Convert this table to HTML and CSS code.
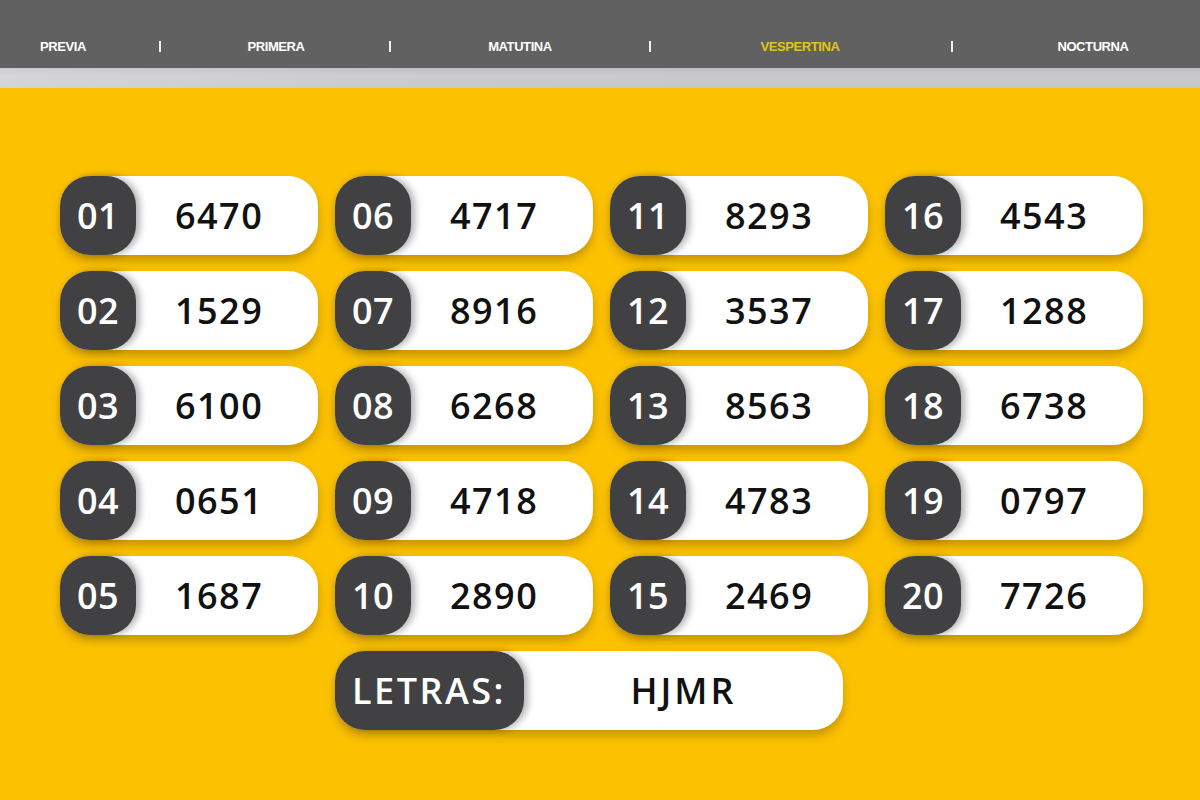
FILE: index.html
```html
<!DOCTYPE html>
<html lang="es">
<head>
<meta charset="utf-8">
<title>Resultados Vespertina</title>
<link rel="stylesheet" href="styles.css">
</head>
<body>
<header class="topbar">
  <nav class="nav">
    <span class="nav-item">PREVIA</span>
    <span class="sep"></span>
    <span class="nav-item">PRIMERA</span>
    <span class="sep"></span>
    <span class="nav-item">MATUTINA</span>
    <span class="sep"></span>
    <span class="nav-item active">VESPERTINA</span>
    <span class="sep"></span>
    <span class="nav-item">NOCTURNA</span>
  </nav>
</header>
<div class="strip"></div>
<main class="board">
  <div class="grid">
    <div class="pill"><span class="pos">01</span><span class="num">6470</span></div>
    <div class="pill"><span class="pos">06</span><span class="num">4717</span></div>
    <div class="pill"><span class="pos">11</span><span class="num">8293</span></div>
    <div class="pill"><span class="pos">16</span><span class="num">4543</span></div>

    <div class="pill"><span class="pos">02</span><span class="num">1529</span></div>
    <div class="pill"><span class="pos">07</span><span class="num">8916</span></div>
    <div class="pill"><span class="pos">12</span><span class="num">3537</span></div>
    <div class="pill"><span class="pos">17</span><span class="num">1288</span></div>

    <div class="pill"><span class="pos">03</span><span class="num">6100</span></div>
    <div class="pill"><span class="pos">08</span><span class="num">6268</span></div>
    <div class="pill"><span class="pos">13</span><span class="num">8563</span></div>
    <div class="pill"><span class="pos">18</span><span class="num">6738</span></div>

    <div class="pill"><span class="pos">04</span><span class="num">0651</span></div>
    <div class="pill"><span class="pos">09</span><span class="num">4718</span></div>
    <div class="pill"><span class="pos">14</span><span class="num">4783</span></div>
    <div class="pill"><span class="pos">19</span><span class="num">0797</span></div>

    <div class="pill"><span class="pos">05</span><span class="num">1687</span></div>
    <div class="pill"><span class="pos">10</span><span class="num">2890</span></div>
    <div class="pill"><span class="pos">15</span><span class="num">2469</span></div>
    <div class="pill"><span class="pos">20</span><span class="num">7726</span></div>

    <div class="pill letras"><span class="pos">LETRAS:</span><span class="num">HJMR</span></div>
  </div>
</main>
</body>
</html>
```
FILE: styles.css
```css
* { box-sizing: border-box; }
html, body { margin: 0; padding: 0; }
body {
  width: 1200px;
  height: 800px;
  overflow: hidden;
  background: #fcc200;
  font-family: "Open Sans", "Liberation Sans", sans-serif;
}
.topbar {
  height: 68px;
  background: #616161;
}
.nav {
  display: grid;
  grid-template-columns: 126px 68px 164px 64px 196px 64px 236px 68px 214px;
  align-items: center;
  height: 68px;
  padding-top: 25px;
}
.nav-item {
  text-align: center;
  color: #ffffff;
  font-family: "Liberation Sans", Arial, sans-serif;
  font-weight: 700;
  font-size: 13px;
  letter-spacing: -0.4px;
  line-height: 14px;
}
.nav-item.active { color: #e2c51c; }
.sep {
  justify-self: center;
  width: 2px;
  height: 11px;
  background: #f2f2f2;
}
.strip {
  height: 20px;
  background:
    linear-gradient(90deg, rgba(255,255,255,0.25) 0%, rgba(255,255,255,0.05) 35%, rgba(255,255,255,0) 60%),
    linear-gradient(180deg, #bdbdc2 0%, #c9c9ce 40%, #c6c6cb 100%);
}
.board {
  padding: 88px 0 0 60px;
}
.grid {
  display: grid;
  grid-template-columns: repeat(4, 258px);
  grid-auto-rows: 79px;
  column-gap: 17px;
  row-gap: 16px;
}
.pill {
  display: flex;
  align-items: stretch;
  background: #ffffff;
  border-radius: 30px;
  box-shadow: 0 6px 10px rgba(110, 70, 0, 0.35);
}
.pos {
  display: flex;
  align-items: center;
  justify-content: center;
  padding: 0 17px;
  background: #414143;
  color: #ffffff;
  border-radius: 30px;
  font-size: 36px;
  font-weight: 600;
  letter-spacing: 0.5px;
  box-shadow: 4px 0 7px rgba(0, 0, 0, 0.3);
}
.num {
  flex: 1;
  display: flex;
  align-items: center;
  justify-content: center;
  padding-right: 16px;
  color: #111111;
  font-size: 36px;
  font-weight: 600;
  letter-spacing: 1.5px;
}
.letras {
  grid-column: 2 / span 2;
  justify-self: start;
  width: 508px;
}
.letras .pos {
  padding: 0 18px 0 17px;
  letter-spacing: 2.5px;
}
.letras .num { padding-right: 0; letter-spacing: 3px; }
```
